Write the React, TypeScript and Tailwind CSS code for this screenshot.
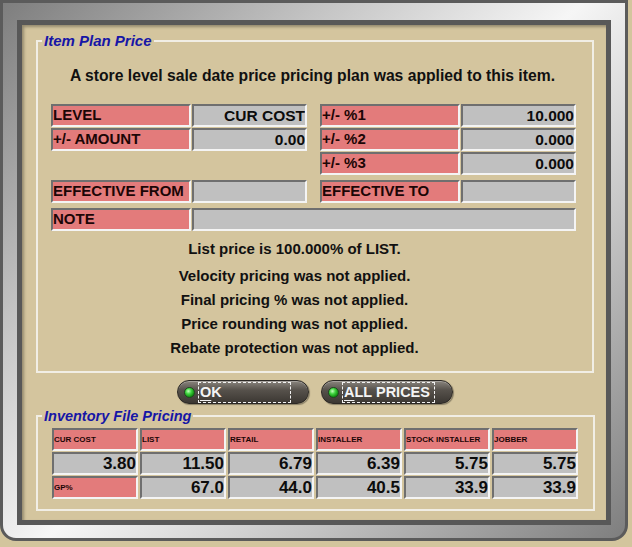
import React from 'react';

const cellBase =
  'h-[23px] border-2 border-t-[#6f6f6f] border-l-[#6f6f6f] border-r-[#f4f4f4] border-b-[#f4f4f4] flex items-center overflow-hidden whitespace-nowrap';
const labelCell = `${cellBase} bg-[#e37b7b] text-[#1c0606]`;
const valueCell = `${cellBase} bg-[#c0c0c0] text-[#0c0c0c] justify-end`;

interface PairProps {
  label?: string;
  value?: string;
  wide?: boolean;
}

// label + value box, blank spacer when no label is given
const Pair: React.FC<PairProps> = ({ label, value = '', wide }) => {
  if (label === undefined) return <div className="w-[256px]" />;
  return (
    <div className="flex gap-px">
      <div className={`${labelCell} w-[140px] text-[15px] font-bold`}>{label}</div>
      <div className={`${valueCell} ${wide ? 'w-[384px]' : 'w-[115px]'} text-[15.5px] font-bold`}>{value}</div>
    </div>
  );
};

const PillButton: React.FC<{ text: string }> = ({ text }) => (
  <button
    type="button"
    className="w-[132px] h-[24px] rounded-full border border-[#2b2824] bg-[linear-gradient(to_bottom,#8a857e_0%,#57524c_40%,#3b3732_100%)] shadow-[inset_0_1px_0_rgba(255,255,255,0.25),1px_1px_1px_rgba(0,0,0,0.35)] flex items-center pl-[6px] pr-[17px]"
  >
    <span className="w-[11px] h-[11px] shrink-0 rounded-full border border-[#1d4a1d] bg-[radial-gradient(circle_at_38%_35%,#c6ffbd_0%,#3fd43f_35%,#149214_70%,#0a5a0a_100%)]" />
    <span className="ml-[3px] flex-1 h-[21px] border border-dashed border-[#f2f2f2] flex items-center pl-px text-[14.5px] font-bold text-[#f4f4f4] leading-none">
      <span className="underline underline-offset-[3px]">{text[0]}</span>
      {text.slice(1)}
    </span>
  </button>
);

const headers = ['CUR COST', 'LIST', 'RETAIL', 'INSTALLER', 'STOCK INSTALLER', 'JOBBER'];
const prices = ['3.80', '11.50', '6.79', '6.39', '5.75', '5.75'];
const margins = ['67.0', '44.0', '40.5', '33.9', '33.9'];

const notes = [
  'Velocity pricing was not applied.',
  'Final pricing % was not applied.',
  'Price rounding was not applied.',
  'Rebate protection was not applied.',
];

export default function App() {
  return (
    <div className="w-[632px] h-[547px] bg-[#d3c59d] overflow-hidden font-['Liberation_Sans',Arial,sans-serif]">
      {/* grey bezel */}
      <div className="w-[628px] h-[541px] border-[3px] border-[#5b5b5b] rounded-b-[16px] bg-[linear-gradient(135deg,#7e7e7e_0%,#c4c4c4_28%,#f6f6f6_50%,#c4c4c4_72%,#7e7e7e_100%)] pl-[14px] pt-[17px]">
        <div className="w-[594px] h-[505px] border-[5px] border-[#585858] bg-[#d4c59e] shadow-[inset_2px_2px_3px_rgba(0,0,0,0.3)] pt-[8px]">
          {/* Item Plan Price */}
          <fieldset className="ml-[14px] w-[558px] border-2 border-[#f1eee5]">
            <legend className="ml-[4px] px-[2px] text-[15px] leading-[16px] font-bold italic text-[#1616a6]">
              Item Plan Price
            </legend>
            <p className="mt-[18px] pr-[5px] text-center text-[15.7px] leading-[18px] font-bold text-[#111]">
              A store level sale date price pricing plan was applied to this item.
            </p>

            <div className="mt-[19px] ml-[13px] flex flex-col">
              <div className="flex flex-col gap-px">
                <div className="flex gap-[13px]">
                  <Pair label="LEVEL" value="CUR COST" />
                  <Pair label="+/- %1" value="10.000" />
                </div>
                <div className="flex gap-[13px]">
                  <Pair label="+/- AMOUNT" value="0.00" />
                  <Pair label="+/- %2" value="0.000" />
                </div>
                <div className="flex gap-[13px]">
                  <Pair />
                  <Pair label="+/- %3" value="0.000" />
                </div>
              </div>
              <div className="mt-[5px] flex gap-[13px]">
                <Pair label="EFFECTIVE FROM" />
                <Pair label="EFFECTIVE TO" />
              </div>
              <div className="mt-[5px]">
                <Pair label="NOTE" wide />
              </div>
            </div>

            <div className="ml-[13px] w-[487px] mb-[11px] text-center text-[15px] font-bold text-[#111]">
              <p className="mt-[9px] leading-[18px]">List price is 100.000% of LIST.</p>
              <div className="mt-[6px] leading-[24px]">
                {notes.map((n) => (
                  <p key={n}>{n}</p>
                ))}
              </div>
            </div>
          </fieldset>

          <div className="mt-[7px] ml-[155px] flex gap-[12px]">
            <PillButton text="OK" />
            <PillButton text="ALL PRICES" />
          </div>

          {/* Inventory File Pricing */}
          <fieldset className="mt-[4px] ml-[14px] w-[559px] border-2 border-[#f1eee5]">
            <legend className="ml-[4px] px-[2px] text-[14.5px] leading-[16px] font-bold italic text-[#1616a6]">
              Inventory File Pricing
            </legend>
            <div className="mt-[4px] mb-[10px] ml-[14px] w-[526px] grid grid-cols-6 gap-x-[2px] gap-y-px">
              {headers.map((h) => (
                <div key={h} className={`${labelCell} text-[8px] font-bold`}>
                  {h}
                </div>
              ))}
              {prices.map((p, i) => (
                <div key={i} className={`${valueCell} text-[17px] font-bold`}>
                  {p}
                </div>
              ))}
              <div className={`${labelCell} text-[8px] font-bold`}>GP%</div>
              {margins.map((m, i) => (
                <div key={i} className={`${valueCell} text-[17px] font-bold`}>
                  {m}
                </div>
              ))}
            </div>
          </fieldset>
        </div>
      </div>
    </div>
  );
}
